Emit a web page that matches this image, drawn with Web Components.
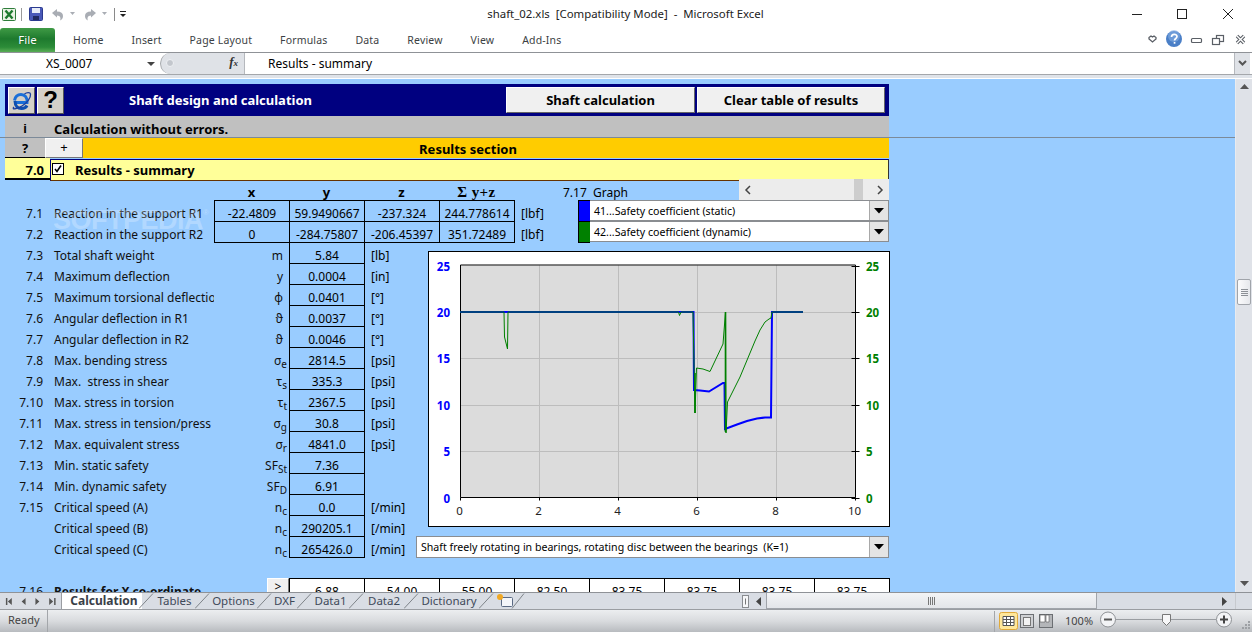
<!DOCTYPE html>
<html>
<head>
<meta charset="utf-8">
<title>shaft_02.xls</title>
<style>
  html, body { margin: 0; padding: 0; background: #fff; overflow: hidden; }
  body { font-family: "Noto Sans", "Liberation Sans", sans-serif; font-size: 12px; color: #000; }
</style>
</head>
<body>
<excel-app>
  <excel-titlebar>shaft_02.xls  [Compatibility Mode]  -  Microsoft Excel</excel-titlebar>
  <excel-ribbon></excel-ribbon>
  <excel-formula name="XS_0007">Results - summary</excel-formula>
  <excel-sheet></excel-sheet>
  <excel-tabs></excel-tabs>
  <excel-status></excel-status>
</excel-app>

<script>
// little helper, every element is just a shadow root with a template in it
function make(tag, html, init) {
  const tpl = document.createElement('template');
  tpl.innerHTML = html;
  customElements.define(tag, class extends HTMLElement {
    constructor() {
      super();
      this.attachShadow({ mode: 'open' }).appendChild(tpl.content.cloneNode(true));
    }
    connectedCallback() {
      if (init) init(this, this.shadowRoot);
    }
  });
}

const FONT = `"Noto Sans", "Liberation Sans", sans-serif`;

make('excel-app', `
  <style>
    :host { display: flex; flex-direction: column; width: 1252px; height: 632px; overflow: hidden; font-family: ${FONT}; }
  </style>
  <slot></slot>
`);

make('excel-titlebar', `
  <style>
    :host { display: flex; align-items: center; height: 28px; background: #fff; position: relative; flex: none; }
    .qat { display: flex; align-items: center; padding-left: 0; height: 28px; }
    .qat svg { display: block; flex: none; }
    .title { position: absolute; left: 0; right: 0; top: 6px; text-align: center; font-size: 11.400px; color: #222; white-space: pre; padding-right: 1px; }
    .win { margin-left: auto; display: flex; }
  </style>
  <div class="qat">
    <svg width="126" height="28" viewBox="0 0 126 28">
      <rect x="2.500" y="8.500" width="13" height="12" rx="1" fill="#e8f3e4" stroke="#2f7d3b"/>
      <path d="M5.500 10.500l7 8M12.500 10.500l-7 8" stroke="#1d7a2e" stroke-width="2.400"/>
      <path d="M21.500 8v13" stroke="#9a9a9a"/>
      <rect x="29.500" y="7.500" width="13" height="13" rx="1" fill="#4a59b8" stroke="#2b3a8f"/>
      <rect x="32" y="8" width="8" height="5" fill="#e7ecf8"/>
      <rect x="33" y="16" width="6" height="4" fill="#20295f"/>
      <path d="M52 13l5-4v2.500c4 0 6 1.500 6 4.500 0 2-1 3.500-3 4.500 1-2 .5-5-3-5v2z" fill="#a9adb4"/>
      <path d="M70 12h5l-2.500 3z" fill="#a9adb4"/>
      <path d="M96 13l-5-4v2.500c-4 0-6 1.500-6 4.500 0 2 1 3.500 3 4.500-1-2-.5-5 3-5v2z" fill="#a9adb4"/>
      <path d="M102 12h5l-2.500 3z" fill="#a9adb4"/>
      <path d="M114.500 8v13" stroke="#8a8a8a"/>
      <path d="M120 11.500h6" stroke="#222"/><path d="M120 14h6l-3 3z" fill="#222"/>
    </svg>
  </div>
  <div class="title"><slot></slot></div>
  <div class="win">
    <svg width="130" height="28" viewBox="1122 0 130 28">
      <path d="M1132 14.500h10" stroke="#222"/>
      <rect x="1177.500" y="9.500" width="9" height="9" fill="none" stroke="#222"/>
      <path d="M1223 9l10 10M1233 9l-10 10" stroke="#222" fill="none"/>
    </svg>
  </div>
`);

make('excel-ribbon', `
  <style>
    :host { display: flex; align-items: stretch; height: 25px; flex: none; background: #fff; border-bottom: 1px solid #8f9297; box-sizing: border-box; }
    .file { width: 55px; flex: none; color: #fff; text-align: center; line-height: 23px; font-size: 11.500px; border-radius: 3px 3px 0 0;
      background: linear-gradient(#3f9a45, #1e7a2e 45%, #2c8c38 80%, #59ad55); margin-right: 18px; text-shadow: 0 0 1px #0a4a15; }
    .tabs { display: flex; gap: 28px; align-items: center; font-size: 10.500px; letter-spacing: .16px; color: #3c3f44; padding-bottom: 1px; }
    .right { margin-left: auto; }
    .right svg { display: block; }
  </style>
  <div class="file">File</div>
  <div class="tabs"><span>Home</span><span>Insert</span><span>Page Layout</span><span>Formulas</span><span>Data</span><span>Review</span><span>View</span><span>Add-Ins</span></div>
  <div class="right">
    <svg width="110" height="24" viewBox="1142 28 110 24">
      <path d="M1149 37.500l2-1.500 1.500 1 1.500-1 2 1.500v1.500l-3.500 3-3.500-3z" fill="none" stroke="#5a5f66" stroke-width="1.300"/>
      <circle cx="1174" cy="39" r="8" fill="#4a7fc7"/>
      <circle cx="1174" cy="36" r="6" fill="#85aee3" opacity=".6"/>
      <path d="M1171.500 37c0-3.500 5.500-3.500 5.500-.5 0 2-2.500 2-2.500 4" fill="none" stroke="#fff" stroke-width="1.700"/>
      <rect x="1173.700" y="42" width="1.700" height="1.700" fill="#fff"/>
      <rect x="1191.500" y="38.500" width="10" height="4" rx="1" fill="#fff" stroke="#5a5f66" stroke-width="1.200"/>
      <rect x="1216.500" y="35.500" width="7" height="6" fill="#fff" stroke="#5a5f66" stroke-width="1.200"/>
      <rect x="1212.500" y="38.500" width="7" height="6" fill="#fff" stroke="#5a5f66" stroke-width="1.200"/>
      <path d="M1237 36l7 7M1244 36l-7 7" stroke="#5a5f66" stroke-width="3.400"/>
      <path d="M1237 36l7 7M1244 36l-7 7" stroke="#fff" stroke-width="1.400"/>
    </svg>
  </div>
`);

make('excel-formula', `
  <style>
    :host { display: block; flex: none; height: 26px; background: #dfe3e9; box-sizing: border-box; border-bottom: 1px solid #fff; }
    .bar { display: flex; height: 21px; background: #fff; border-bottom: 1px solid #a4a7ab; box-sizing: content-box; align-items: stretch; }
    .name { width: 160px; flex: none; position: relative; font-size: 12px; line-height: 22px; padding-left: 46px; box-sizing: border-box; }
    .name i { position: absolute; left: 147px; top: 9px; border: 4px solid transparent; border-top: 4px solid #444; border-bottom: 0; }
    .sash { width: 85px; flex: none; background: #dfe2e7; border-radius: 11px 0 0 11px; border-left: 1px solid #a4a7ab; border-right: 1px solid #b5b8bd; box-sizing: border-box; position: relative; }
    .sash b { position: absolute; left: 5px; top: 6px; width: 8px; height: 8px; border-radius: 50%; background: #c3c7cd; border: 1px solid #eef0f3; box-sizing: border-box; }
    .sash em { position: absolute; right: 6px; top: 1px; font: italic bold 13px "Liberation Serif", serif; color: #333; }
    .sash em small { font-size: 9px; }
    .text { flex: 1; padding-left: 23px; font-size: 12px; line-height: 22px; }
    .more { width: 15px; flex: none; background: #dfe2e7; border-left: 1px solid #b5b8bd; margin-right: 2px; display: flex; align-items: center; justify-content: center; }
  </style>
  <div class="bar">
    <div class="name"><span id="n"></span><i></i></div>
    <div class="sash"><b></b><em>f<small>x</small></em></div>
    <div class="text"><slot></slot></div>
    <div class="more"><svg width="9" height="7"><path d="M1 1l3.500 3.500L8 1" fill="none" stroke="#555" stroke-width="2"/></svg></div>
  </div>
`, (el, root) => { root.getElementById('n').textContent = el.getAttribute('name'); });

make('v-scroll', `
  <style>
    :host { display: flex; flex-direction: column; width: 17px; flex: none; background: #dfe2e8; border-left: 1px solid #e9ebef; box-sizing: border-box; }
    .up, .down { height: 16px; display: flex; align-items: center; justify-content: center; flex: none; }
    .thumb { margin: 184px 1px 0; height: 26px; background: linear-gradient(90deg, #fbfbfc, #e6e8ec); border: 1px solid #a0a4aa; box-sizing: border-box; border-radius: 2px; display: flex; flex-direction: column; align-items: center; justify-content: center; gap: 1px; }
    .thumb i { width: 7px; height: 1px; background: #8c9096; display: block; }
    .gap { flex: 1; }
  </style>
  <div class="up"><svg width="9" height="6"><path d="M0 5h9L4.500 0z" fill="#555"/></svg></div>
  <div class="thumb"><i></i><i></i><i></i><i></i></div>
  <div class="gap"></div>
  <div class="down"><svg width="9" height="6"><path d="M0 0h9L4.500 5z" fill="#555"/></svg></div>
`);

make('combo-box', `
  <style>
    :host { display: flex; height: 21px; background: #fff; border: 1px solid #8a8d91; border-left: 0; box-sizing: border-box; font-size: 10.600px; align-items: center; }
    :host([boxed]) { border-left: 1px solid #8a8d91; height: 22px; }
    .t { flex: 1; padding-left: 4px; white-space: pre; }
    .b { width: 19px; height: 100%; flex: none; background: #e4e4e4; border-left: 1px solid #a8a8a8; box-sizing: border-box; display: flex; align-items: center; justify-content: center; }
  </style>
  <div class="t"><slot></slot></div>
  <div class="b"><svg width="10" height="6"><path d="M0 0h10L5 5.500z" fill="#000"/></svg></div>
`);

make('shaft-chart', `
  <style>
    :host { display: block; width: 462px; height: 276px; flex: none; }
    svg { display: block; }
    text { font-family: ${FONT}; font-size: 11.500px; }
    .l { fill: #0000ff; font-weight: 700; }
    .r { fill: #008000; font-weight: 700; }
    .b { fill: #222; }
  </style>
  <svg id="c" width="462" height="276" viewBox="428 251 462 276">
    <rect x="428.500" y="251.500" width="461" height="275" fill="#fff" stroke="#000"/>
    <rect x="460.500" y="265.500" width="395" height="232" fill="#dcdcdc"/>
    <g id="grid" stroke="#bdbdbd" stroke-width="1"></g>
    <path d="M460.500 265v232.500H855.500V265z" fill="none" stroke="#000"/>
    <g id="ticks" stroke="#000"></g>
    <g id="labels"></g>
    <polyline fill="none" stroke="#0000ff" stroke-width="2" points="460,312 693.500,312 694,390 700,390.500 709,391.500 723,383 724.500,383 725,429 737,424.500 747,421 757,418.500 765,417.500 771,417.500 772,312 803,312"/>
    <polyline fill="none" stroke="#008000" stroke-width="1" points="460,312 504,312 504.500,337 507.500,349 508,312 678.500,312 679.500,315.500 681,312 693,312 695,413 696.500,368 703,369 710,371.500 723,344 725.500,312 726,433 727.500,402 733,391 740,377 745,365 750,353 755,341 760,330 765,322 769,319 771,318 772,312 803,312"/>
    <path d="M695 413v-40M725.500 312v120" stroke="#008000" stroke-width="1.600" fill="none"/>
  </svg>
`, (el, root) => {
  const ns = 'http://www.w3.org/2000/svg';
  const add = (parent, name, attrs, text) => {
    const n = document.createElementNS(ns, name);
    for (const k in attrs) n.setAttribute(k, attrs[k]);
    if (text !== undefined) n.textContent = text;
    root.getElementById(parent).appendChild(n);
  };
  [2, 4, 6, 8].forEach(v => {
    const x = 460.5 + v * 39.5;
    add('grid', 'path', { d: `M${x} 265.500V497.500` });
  });
  [5, 10, 15, 20].forEach(v => {
    const y = Math.round(497.5 - v * 9.28) + .5;
    add('grid', 'path', { d: `M460.500 ${y}H855.500` });
  });
  for (let v = 0; v <= 10; v += 2) {
    const x = 460.5 + v * 39.5;
    add('ticks', 'path', { d: `M${x} 497.500v3` });
    add('labels', 'text', { class: 'b', x: x - 1, y: 515, 'text-anchor': 'middle' }, v);
  }
  for (let v = 0; v <= 25; v += 5) {
    const y = Math.round(497.5 - v * 9.28) + .5;
    add('ticks', 'path', { d: `M851.500 ${y}h8` });
    add('labels', 'text', { class: 'l', x: 450, y: y + 4, 'text-anchor': 'end' }, v);
    add('labels', 'text', { class: 'r', x: 866, y: y + 4 }, v);
  }
});

const SUMMARY = [
  ['7.3', 'Total shaft weight', 'm', '', '5.84', '[lb]'],
  ['7.4', 'Maximum deflection', 'y', '', '0.0004', '[in]'],
  ['7.5', 'Maximum torsional deflectio', 'φ', '', '0.0401', '[°]'],
  ['7.6', 'Angular deflection in R1', 'ϑ', '', '0.0037', '[°]'],
  ['7.7', 'Angular deflection in R2', 'ϑ', '', '0.0046', '[°]'],
  ['7.8', 'Max. bending stress', 'σ', 'e', '2814.5', '[psi]'],
  ['7.9', 'Max.  stress in shear', 'τ', 's', '335.3', '[psi]'],
  ['7.10', 'Max. stress in torsion', 'τ', 't', '2367.5', '[psi]'],
  ['7.11', 'Max. stress in tension/press', 'σ', 'g', '30.8', '[psi]'],
  ['7.12', 'Max. equivalent stress', 'σ', 'r', '4841.0', '[psi]'],
  ['7.13', 'Min. static safety', 'SF', 'St', '7.36', ''],
  ['7.14', 'Min. dynamic safety', 'SF', 'D', '6.91', ''],
  ['7.15', 'Critical speed (A)', 'n', 'c', '0.0', '[/min]'],
  ['', 'Critical speed (B)', 'n', 'c', '290205.1', '[/min]'],
  ['', 'Critical speed (C)', 'n', 'c', '265426.0', '[/min]'],
];

make('excel-sheet', `
  <style>
    :host { display: flex; flex: none; height: 513px; background: #99ccff; overflow: hidden; font-size: 12px; line-height: 16px; }
    .main { flex: 1; min-width: 0; overflow: hidden; position: relative; }
    .frozen { height: 59px; border-bottom: 1px solid #7c8a99; box-sizing: border-box; padding: 5px 0 0 5px; }
    .navy { width: 884px; height: 32px; background: #000080; display: flex; align-items: center; box-sizing: border-box; padding-left: 3px; color: #fff; font-weight: 700; font-size: 13px; }
    .navy .ico { width: 27px; height: 27px; box-sizing: border-box; background: #d4d0c8; border: 1px solid; border-color: #fff #555 #555 #fff; margin-right: 2px; display: flex; align-items: center; justify-content: center; color: #000; font: 700 24px "Liberation Sans", sans-serif; flex: none; }
    .navy .ttl { margin-left: 63px; width: 184px; margin-right: 193px; white-space: nowrap; flex: none; }
    .btn { height: 26px; background: #f0f0f0; border: 1px solid; border-color: #fff #666 #666 #fff; box-sizing: border-box; color: #000; display: flex; align-items: center; justify-content: center; margin-right: 2px; flex: none; }
    .gray { width: 884px; height: 21px; background: #c0c0c0; display: flex; font-weight: 700; font-size: 13px; align-items: flex-end; }
    .gray b { width: 40px; text-align: center; margin-right: 9px; font-family: "Liberation Sans", sans-serif; }
    .orange { margin-left: 5px; width: 884px; height: 20px; display: flex; font-weight: 700; font-size: 13px; }
    .orange .q { width: 40px; background: #c0c0c0; text-align: center; border-bottom: 1px solid #000; box-sizing: border-box; line-height: 21px; }
    .orange .p { width: 38px; background: #f0f0f0; border: 1px solid; border-color: #fff #777 #777 #fff; box-sizing: border-box; text-align: center; font-weight: 400; }
    .orange .r { flex: 1; background: #ffcc00; text-align: center; line-height: 22px; padding-right: 36px; }
    .yellow { margin-left: 5px; width: 884px; height: 22px; display: flex; font-weight: 700; font-size: 13px; }
    .yellow .n { width: 45px; background: #ffff99; border-bottom: 2px solid #000; box-sizing: border-box; text-align: right; padding-right: 6px; line-height: 24px; flex: none; }
    .yellow .t { flex: 1; background: #ffff99; border-top: 1px solid #000080; border-bottom: 1px solid #663300; border-right: 1px solid #333; border-left: 1px solid #000080; box-sizing: border-box; display: flex; align-items: center; position: relative; top: 1px; }
    .chk { width: 10px; height: 10px; border: 1px solid #000; background: #fff; margin: -3px 11px 0 1px; flex: none; display: flex; }
    .top { display: grid; margin-left: 5px; width: 884px; grid-template-columns: 45px 164px 75px 75px 75px 75px 64px 311px; grid-template-rows: 20px 21px 21px; }
    .hd { font-weight: 700; text-align: center; font-size: 13px; line-height: 25px; height: 20px; }
    .hd.s { font: 700 15px "Liberation Serif", serif; line-height: 25px; letter-spacing: .4px; }
    .num { text-align: right; padding-right: 7px; padding-top: 6px; color: #111; }
    .lab { padding-left: 4px; padding-top: 6px; white-space: pre; overflow: hidden; color: #111; }
    .cell { border: 1px solid #000; margin: 0 -1px -1px 0; text-align: center; box-sizing: border-box; padding-top: 5px; }
    .unit { padding: 6px 0 0 7px; }
    .graph { grid-column: 7 / 9; display: flex; height: 20px; }
    .graph .g { width: 225px; padding-left: 49px; box-sizing: border-box; line-height: 25px; flex: none; white-space: pre; }
    .hs { width: 150px; height: 21px; background: #ececec; display: flex; align-items: center; justify-content: space-between; padding: 0 5px; box-sizing: border-box; position: relative; top: -1px; font-size: 0; }
    .hs s { position: absolute; left: 115px; top: 0; width: 9px; height: 21px; background: #cdcdcd; }
    .sel { display: flex; }
    .swatch { width: 12px; flex: none; box-sizing: border-box; border: 1px solid #000; border-right: 0; margin-bottom: -1px; }
    .sel combo-box { flex: 1; margin-bottom: -1px; }
    .lower { display: flex; margin-left: 5px; width: 884px; }
    .grid { display: grid; grid-template-columns: 45px 164px 75px 75px 52px; grid-auto-rows: 21px; flex: none; }
    .sym { text-align: right; padding: 6px 6px 0 0; white-space: nowrap; color: #111; }
    .sym.has { padding-right: 2px; }
    .sym sub { font-size: 10px; line-height: 0; vertical-align: -3px; }
    .rightcol { flex: none; width: 473px; }
    .chartwrap { margin: 9px 0 9px 12px; }
    .last { display: grid; margin-left: 5px; grid-template-columns: 45px 164px 53px 22px repeat(8, 75px); grid-auto-rows: 21px; margin-top: 20px; width: 884px; }
    .last .go { background: #f0f0f0; border: 1px solid; border-color: #fff #777 #777 #fff; box-sizing: border-box; text-align: center; line-height: 15px; }
    .last .v { background: #fff; border: 1px solid #000; margin: 0 -1px -1px 0; text-align: center; box-sizing: border-box; padding-top: 5px; }
    .wm { position: absolute; left: 53px; top: 126px; font: 700 27px "Liberation Sans", sans-serif; color: rgba(255,255,255,.25); pointer-events: none; letter-spacing: -.5px; }
    .wm small { font-size: 8px; vertical-align: 14px; }
  </style>
  <div class="main">
    <div class="frozen">
      <div class="navy">
        <div class="ico">
          <svg width="21" height="21" viewBox="0 0 21 21">
            <path d="M4 12.500h12c.5-5-2-8-6-8-3.500 0-6 2.500-6.500 6" fill="none" stroke="#1a6fd8" stroke-width="3"/>
            <path d="M4 11c0 5 3 7.500 6.500 7.500 2.500 0 4.500-1 5.500-3" fill="none" stroke="#0f4fb0" stroke-width="3"/>
            <path d="M3 17c-3 3 3 2 8-1 5-3 9-8 8.500-12-.3-2-4-1.500-6 0" fill="none" stroke="#1c3f9e" stroke-width="1.300"/>
          </svg>
        </div>
        <div class="ico">?</div>
        <div class="ttl">Shaft design and calculation</div>
        <div class="btn" style="width:189px">Shaft calculation</div>
        <div class="btn" style="width:188px">Clear table of results</div>
      </div>
      <div class="gray"><b>i</b><span>Calculation without errors.</span></div>
    </div>
    <div class="orange"><div class="q">?</div><div class="p">+</div><div class="r">Results section</div></div>
    <div class="yellow"><div class="n">7.0</div><div class="t"><span class="chk"><svg width="10" height="10"><path d="M2 5l2 2.500L8 1.500" fill="none" stroke="#000" stroke-width="1.600"/></svg></span>Results - summary</div></div>

    <div class="top">
      <div></div><div></div>
      <div class="hd">x</div><div class="hd">y</div><div class="hd">z</div><div class="hd s">Σ y+z</div>
      <div class="graph"><div class="g">7.17  Graph</div>
        <div class="hs"><svg width="8" height="10"><path d="M6 1L2 5l4 4" fill="none" stroke="#444" stroke-width="1.500"/></svg><s></s><svg width="8" height="10"><path d="M2 1l4 4-4 4" fill="none" stroke="#444" stroke-width="1.500"/></svg></div>
      </div>
      <div class="num">7.1</div><div class="lab">Reaction in the support R1</div>
      <div class="cell">-22.4809</div><div class="cell">59.9490667</div><div class="cell">-237.324</div><div class="cell">244.778614</div>
      <div class="unit">[lbf]</div>
      <div class="sel"><div class="swatch" style="background:#0000ff"></div><combo-box style="flex:1">41...Safety coefficient (static)</combo-box></div>
      <div class="num">7.2</div><div class="lab">Reaction in the support R2</div>
      <div class="cell">0</div><div class="cell">-284.75807</div><div class="cell">-206.45397</div><div class="cell">351.72489</div>
      <div class="unit">[lbf]</div>
      <div class="sel"><div class="swatch" style="background:#008000"></div><combo-box style="flex:1">42...Safety coefficient (dynamic)</combo-box></div>
    </div>

    <div class="lower">
      <div class="grid" id="rows"></div>
      <div class="rightcol">
        <div class="chartwrap"><shaft-chart></shaft-chart></div>
        <combo-box boxed>Shaft freely rotating in bearings, rotating disc between the bearings  (K=1)</combo-box>
      </div>
    </div>

    <div class="last">
      <div class="num">7.16</div><div class="lab" style="font-weight:700;grid-column:2 / 4">Results for X co-ordinate</div>
      <div class="go">&gt;</div>
      <div class="v">6.88</div><div class="v">54.00</div><div class="v">55.00</div><div class="v">82.50</div>
      <div class="v">83.75</div><div class="v">83.75</div><div class="v">83.75</div><div class="v">83.75</div>
    </div>

    <div class="wm">SOFTPEDIA<small>®</small></div>
  </div>
  <v-scroll></v-scroll>
`, (el, root) => {
  const rows = root.getElementById('rows');
  const esc = s => s.replace(/&/g, '&amp;').replace(/</g, '&lt;');
  rows.innerHTML = SUMMARY.map(([n, label, sym, sub, val, unit]) => `
    <div class="num">${n}</div>
    <div class="lab">${esc(label)}</div>
    <div class="sym${sub ? ' has' : ''}">${sym}${sub ? `<sub>${sub}</sub>` : ''}</div>
    <div class="cell">${val}</div>
    <div class="unit">${unit}</div>`).join('');
});

make('excel-tabs', `
  <style>
    :host { display: flex; flex: none; height: 16px; background: #d9dde4; border-top: 1px solid #8f9297; box-sizing: content-box; font-size: 11.500px; color: #3f4a5a; align-items: stretch; border-bottom: 1px solid #9a9da2; position: relative; }
    .nav { width: 62px; flex: none; display: flex; align-items: center; border-right: 1px solid #9a9da2; box-sizing: border-box; }
    .tab { display: flex; align-items: center; flex: none; line-height: 16px; }
    .tab.on { background: #fff; font-weight: 700; color: #3a4048; width: 80px; justify-content: center; padding-left: 4px; box-sizing: border-box; font-size: 12px; }
    .sl { width: 15px; height: 16px; flex: none; display: block; }
    .split { margin-left: auto; display: flex; align-items: center; }
    .hs { width: 331px; height: 16px; box-sizing: border-box; background: linear-gradient(#f3f4f6, #e3e5e9); border: 1px solid #a0a4aa; border-width: 0 1px 1px 1px; display: flex; align-items: center; justify-content: center; }
  </style>
  <div class="nav">
    <svg width="62" height="15" viewBox="0 0 62 15" fill="#555">
      <path d="M6 4v7h1.500V4zM12 4v7L8 7.500zM26 4v7l-4-3.500zM36 4v7l4-3.500zM50 4v7l4-3.500zM55 4v7h1.500V4z"/>
    </svg>
  </div>
  <div class="tab on">Calculation</div>
  <svg class="sl" style="margin-left:-3px" viewBox="0 0 15 16"><path d="M0 15.500L14 .5" stroke="#7f8489" fill="none"/></svg>
  <div class="tab" style="width:41px;justify-content:center">Tables</div>
  <svg class="sl" viewBox="0 0 15 16"><path d="M0 15.500L14 .5" stroke="#7f8489" fill="none"/></svg>
  <div class="tab" style="width:47px;justify-content:center">Options</div>
  <svg class="sl" viewBox="0 0 15 16"><path d="M0 15.500L14 .5" stroke="#7f8489" fill="none"/></svg>
  <div class="tab" style="width:25px;justify-content:center">DXF</div>
  <svg class="sl" viewBox="0 0 15 16"><path d="M0 15.500L14 .5" stroke="#7f8489" fill="none"/></svg>
  <div class="tab" style="width:37px;justify-content:center">Data1</div>
  <svg class="sl" viewBox="0 0 15 16"><path d="M0 15.500L14 .5" stroke="#7f8489" fill="none"/></svg>
  <div class="tab" style="width:40px;justify-content:center">Data2</div>
  <svg class="sl" viewBox="0 0 15 16"><path d="M0 15.500L14 .5" stroke="#7f8489" fill="none"/></svg>
  <div class="tab" style="width:60px;justify-content:center">Dictionary</div>
  <svg class="sl" viewBox="0 0 15 16"><path d="M0 15.500L14 .5" stroke="#7f8489" fill="none"/></svg>
  <svg width="32" height="16" viewBox="0 0 32 16" style="flex:none">
    <rect x="7.500" y="4.500" width="11" height="9" rx="1" fill="#f4f6fa" stroke="#5b6a84"/>
    <circle cx="6" cy="4" r="3" fill="#f0a825"/>
    <path d="M18 15.500L30 .5" stroke="#7f8489" fill="none"/>
  </svg>
  <div class="split">
    <svg width="28" height="16" viewBox="0 0 28 16">
      <rect x="4.500" y="2.500" width="6" height="12" fill="#f6f7f9" stroke="#8a8d91"/>
      <path d="M7.500 5.500v6" stroke="#777"/>
      <path d="M23 4v9l-5-4.500z" fill="#444"/>
    </svg>
    <div class="hs"><svg width="8" height="8"><path d="M.5 0v8M2.500 0v8M4.500 0v8M6.500 0v8" stroke="#777"/></svg></div>
    <svg width="155" height="16" viewBox="0 0 155 16" style="display:block">
      <path d="M125 4v9l5-4.500z" fill="#444"/>
      <path d="M138.500 0v16" stroke="#c6c9ce"/>
    </svg>
  </div>
`);

make('excel-status', `
  <style>
    :host { display: flex; flex: none; height: 22px; align-items: center; background: linear-gradient(#eceef0, #d9dbde 50%, #b8bbbf); font-size: 11px; color: #444; }
    .ready { width: 48px; padding-left: 8px; box-sizing: border-box; border-right: 1px solid #a3a6aa; height: 100%; line-height: 20px; flex: none; }
    .r { margin-left: auto; display: block; }
  </style>
  <div class="ready">Ready</div>
  <svg class="r" width="260" height="22" viewBox="992 610 260 22">
    <path d="M994.500 611v21" stroke="#a3a6aa"/>
    <rect x="999.500" y="612.500" width="18" height="17" rx="2" fill="#ffe79a" stroke="#e0a93a"/>
    <path d="M1003 616.500h11v9h-11zM1003 619.500h11M1003 622.500h11M1006.500 616.500v9M1010.500 616.500v9" fill="#fff" stroke="#555"/>
    <rect x="1020.500" y="614.500" width="13" height="13" fill="#cfd1d4" stroke="#6c6f73"/>
    <rect x="1023.500" y="617.500" width="7" height="8" fill="#f3f3f3" stroke="#777"/>
    <rect x="1039.500" y="614.500" width="13" height="13" fill="#b4b6b9" stroke="#6c6f73"/>
    <path d="M1040 615h5v7h-5zM1046 615h3v7h-3z" fill="#fff" stroke="#555" stroke-width=".6"/>
    <text x="1065" y="625" font-family="Noto Sans, Liberation Sans, sans-serif" font-size="11" fill="#444">100%</text>
    <path d="M1115 619.500h101" stroke="#9a9da1"/>
    <circle cx="1108" cy="619.500" r="7.500" fill="#f2f3f5" stroke="#8e9195"/>
    <path d="M1104 619.500h8" stroke="#555" stroke-width="2"/>
    <path d="M1162.500 614.500h8v7l-4 4-4-4z" fill="#f7f7f8" stroke="#777"/>
    <circle cx="1224" cy="619.500" r="7.500" fill="#f2f3f5" stroke="#8e9195"/>
    <path d="M1220 619.500h8M1224 615.500v8" stroke="#444" stroke-width="2"/>
    <g fill="#9da0a4"><rect x="1248" y="627" width="2" height="2"/><rect x="1245" y="627" width="2" height="2"/><rect x="1242" y="627" width="2" height="2"/><rect x="1248" y="624" width="2" height="2"/><rect x="1245" y="624" width="2" height="2"/><rect x="1248" y="621" width="2" height="2"/></g>
  </svg>
`);
</script>
</body>
</html>
